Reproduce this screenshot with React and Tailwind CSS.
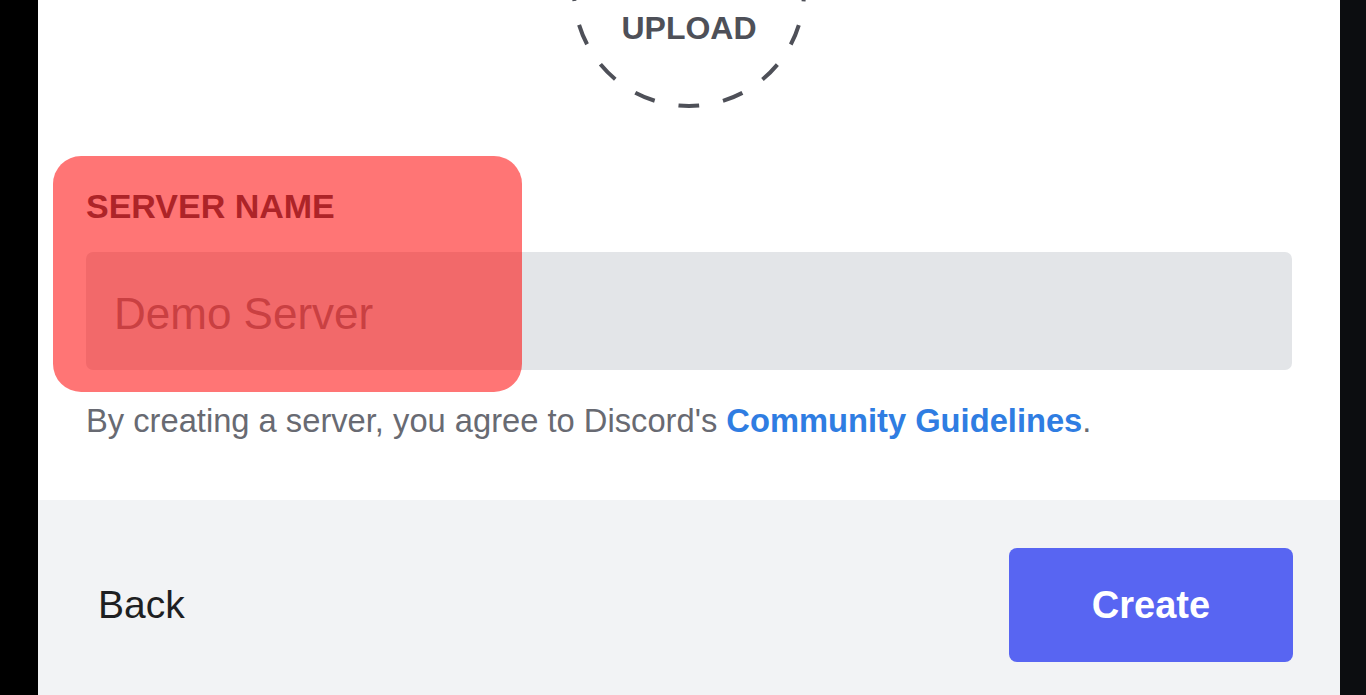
import React from "react";

const FONT = { fontFamily: '"Liberation Sans", Arial, sans-serif' };

function UploadCircle() {
  // dashed circle, 16 dashes; one dash sits at the bottom
  const r = 115;
  const c = 2 * Math.PI * r;
  const period = c / 16;
  const dash = 21;
  return (
    <div className="relative mx-auto -mt-[126px] h-[234px] w-[234px] shrink-0">
      <svg width="234" height="234" viewBox="0 0 234 234" className="absolute inset-0">
        <circle
          cx="117"
          cy="117"
          r={r}
          fill="none"
          stroke="#4e5058"
          strokeWidth="4"
          strokeDasharray={`${dash} ${period - dash}`}
          strokeDashoffset={dash / 2}
        />
      </svg>
      <span className="absolute left-0 right-0 top-[134px] text-center text-[32px] font-bold leading-[40px] text-[#4e5058]">
        UPLOAD
      </span>
    </div>
  );
}

export default function App() {
  return (
    <div className="relative flex h-[695px] w-[1366px] overflow-hidden bg-black" style={FONT}>
      <div className="w-[38px] shrink-0 bg-black" />

      <div className="flex w-[1302px] shrink-0 flex-col bg-white">
        {/* body */}
        <div className="flex flex-col px-[48px] pb-[59px]">
          <UploadCircle />

          <label className="mt-[78px] text-[34px] font-bold leading-[40px] text-[#4e5058]">
            SERVER NAME
          </label>

          <input
            readOnly
            placeholder="Demo Server"
            className="mt-[26px] h-[118px] w-full rounded-[7px] bg-[#e3e5e8] pl-[28px] pt-[6px] text-[44px] text-[#313338] outline-none placeholder:text-[#8a8c90]"
            style={FONT}
          />

          <p className="mt-[31px] text-[32.7px] leading-[40px] text-[#686a72]">
            By creating a server, you agree to Discord's{" "}
            <a className="font-bold text-[#2f7de2]">Community Guidelines</a>.
          </p>
        </div>

        {/* footer */}
        <div className="flex items-center justify-between bg-[#f2f3f5] py-[48px] pl-[60px] pr-[47px]">
          <button className="text-[39px] leading-[40px] text-[#1e1f22]" style={FONT}>
            Back
          </button>
          <button
            className="h-[114px] w-[284px] rounded-[8px] bg-[#5865f2] text-[38px] font-semibold text-white"
            style={FONT}
          >
            Create
          </button>
        </div>
      </div>

      <div className="flex-1 bg-[#0c0d10]" />

      {/* red highlight box drawn over the label/input */}
      <div className="pointer-events-none absolute left-[53px] top-[156px] h-[236px] w-[469px] rounded-[28px] bg-[rgba(255,0,0,0.54)]" />
    </div>
  );
}
